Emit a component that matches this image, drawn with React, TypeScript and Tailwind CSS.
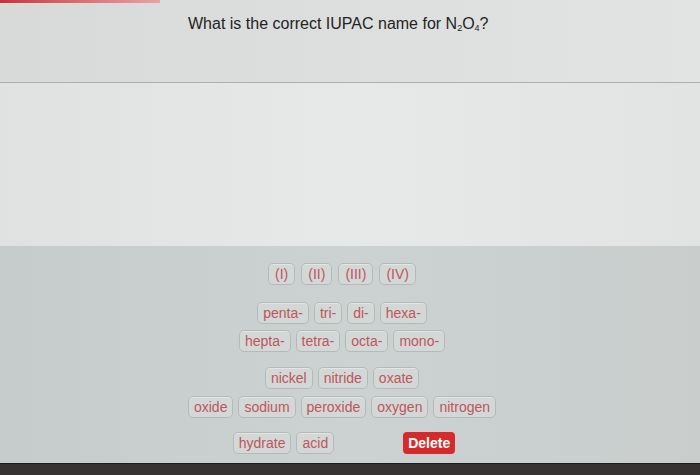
import React from "react";

const chip =
  "h-[22px] px-[5px] flex items-center rounded-[5px] border border-[#b3bbb9] bg-[#d3d8d7] text-[14px] leading-none text-[#bd565b] shadow-[inset_0_1px_0_#e2e6e5]";

function Chip({ label }: { label: string }) {
  return <div className={chip}>{label}</div>;
}

function Row({ items, className = "" }: { items: string[]; className?: string }) {
  return (
    <div className={"flex justify-center gap-[5px] " + className}>
      {items.map((t) => (
        <Chip key={t} label={t} />
      ))}
    </div>
  );
}

export default function App() {
  return (
    <div
      className="w-[700px] h-[475px] flex flex-col overflow-hidden bg-[#dcdfde]"
      style={{ fontFamily: '"Liberation Sans", Arial, sans-serif' }}
    >
      {/* question header */}
      <div className="relative h-[83px] shrink-0 bg-gradient-to-r from-[#d8dad9] to-[#e2e4e3] border-b border-[#a9b0ae]">
        <div className="absolute left-0 top-0 h-[3px] w-[160px] bg-gradient-to-r from-[#c8303a] to-[#e7a2a6]" />
        <div className="pl-[188px] pt-[12px] text-[16px] text-[#232323]">
          What is the correct IUPAC name for N
          <sub className="text-[9px]">2</sub>O<sub className="text-[9px]">4</sub>?
        </div>
      </div>

      {/* answer area */}
      <div className="h-[163px] shrink-0 bg-gradient-to-r from-[#dfe2e1] via-[#e6e9e8] to-[#e2e4e3]" />

      {/* tile panel */}
      <div className="flex-1 flex flex-col bg-gradient-to-r from-[#c5cccb] via-[#cbd2d1] to-[#c9cecd] pt-[17px] pr-[16px]">
        <div className="flex justify-center gap-[6px]">
          {["(I)", "(II)", "(III)", "(IV)"].map((t) => (
            <div key={t} className={chip + " px-[6px]"}>
              {t}
            </div>
          ))}
        </div>
        <Row items={["penta-", "tri-", "di-", "hexa-"]} className="mt-[17px]" />
        <Row items={["hepta-", "tetra-", "octa-", "mono-"]} className="mt-[6px]" />
        <Row items={["nickel", "nitride", "oxate"]} className="mt-[15px]" />
        <Row items={["oxide", "sodium", "peroxide", "oxygen", "nitrogen"]} className="mt-[7px]" />
        <div className="mt-[14px] flex justify-center pl-[4px]">
          <div className="flex gap-[5px]">
            <Chip label="hydrate" />
            <Chip label="acid" />
          </div>
          <div className="w-[69px]" />
          <button className="h-[22px] px-[5px] rounded-[4px] bg-[#d52b2b] text-white text-[14px] font-bold leading-none">
            Delete
          </button>
        </div>
      </div>

      {/* bottom bezel */}
      <div className="h-[12px] shrink-0 bg-[#383333] border-t border-[#1f1c1c]" />
    </div>
  );
}
